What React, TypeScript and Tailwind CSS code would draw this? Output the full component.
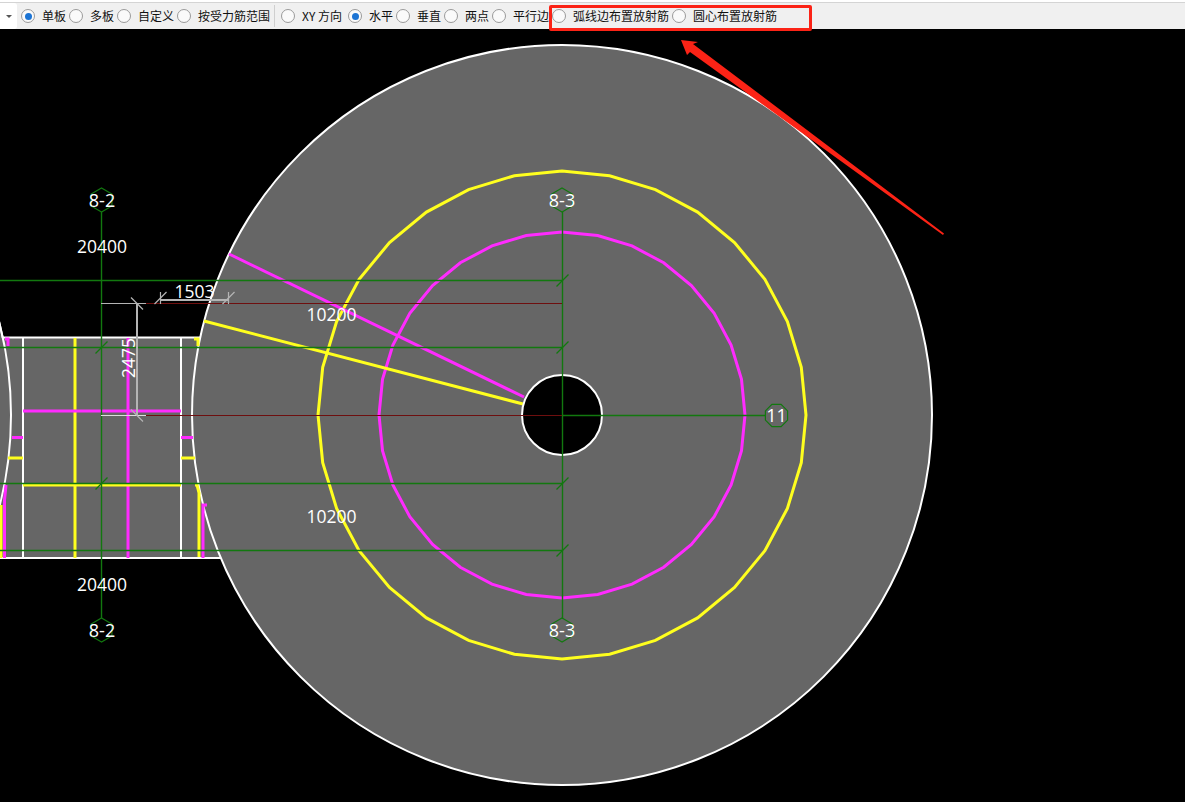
import React from "react";

const ITEMS = [
  { label: "单板", checked: true, w: "w-[24px]" },
  { label: "多板", checked: false, w: "w-[24px]" },
  { label: "自定义", checked: false, w: "w-[36px]" },
  { label: "按受力筋范围", checked: false, w: "w-[72px]" },
];

const ITEMS2 = [
  { label: "XY 方向", checked: false, w: "w-[43px]" },
  { label: "水平", checked: true, w: "w-[24px]" },
  { label: "垂直", checked: false, w: "w-[24px]" },
  { label: "两点", checked: false, w: "w-[24px]" },
  { label: "平行边", checked: false, w: "w-[36px]" },
  { label: "弧线边布置放射筋", checked: false, w: "w-[96px]" },
  { label: "圆心布置放射筋", checked: false, w: "w-[84px]" },
];

const Radio: React.FC<{ label: string; checked: boolean; w: string }> = ({ label, checked, w }) => (
  <div className="flex items-center gap-[7px] mr-[3px]">
    <span className="flex h-[14px] w-[14px] items-center justify-center rounded-full border border-[#9a9a9a] bg-[#fafafa]">
      {checked && <span className="h-[7px] w-[7px] rounded-full bg-[#1c74d4]" />}
    </span>
    <span className={`${w} whitespace-nowrap text-[12px] leading-none text-[#111]`}>{label}</span>
  </div>
);

// regular polygon around the slab centre, with a vertex on each axis
const ring = (cx: number, cy: number, r: number, n: number, rot = 0) =>
  Array.from({ length: n }, (_, i) => {
    const a = (i * 2 * Math.PI) / n + rot;
    return `${(cx + r * Math.cos(a)).toFixed(1)},${(cy + r * Math.sin(a)).toFixed(1)}`;
  }).join(" ");

const GREEN = "#12780f";
const DARKRED = "#6e0f0f";
const DIM = "#b4b4b4";

const Tick: React.FC<{ x: number; y: number; back?: boolean; color?: string; s?: number }> = ({
  x,
  y,
  back,
  color = GREEN,
  s = 6,
}) => <line x1={x - s} y1={back ? y - s : y + s} x2={x + s} y2={back ? y + s : y - s} stroke={color} strokeWidth="1.2" />;

const Label: React.FC<{ x: number; y: number; children: React.ReactNode; rotate?: boolean; size?: number }> = ({
  x,
  y,
  children,
  rotate,
  size = 17.5,
}) => (
  <text
    x={x}
    y={y}
    fill="#fff"
    fontSize={size}
    textAnchor="middle"
    dominantBaseline="central"
    fontFamily="'Open Sans', sans-serif"
    transform={rotate ? `rotate(-90 ${x} ${y})` : undefined}
  >
    {children}
  </text>
);

export default function App() {
  return (
    <div className="relative flex h-[802px] w-[1185px] flex-col overflow-hidden bg-black font-['Noto_Sans_CJK_SC','Noto_Sans',sans-serif]">
      {/* Toolbar */}
      <div className="h-[29px] shrink-0 bg-white pt-[2px]">
        <div className="flex h-[27px] items-center border-t border-[#d4d4d4] bg-[#f0f0f0]">
          <div className="flex h-[26px] w-[17px] items-center justify-center rounded-r-[3px] bg-white pl-[1px]">
            <span className="h-0 w-0 border-x-[3px] border-t-[3px] border-x-transparent border-t-[#555]" />
          </div>
          <div className="ml-[4px] flex items-center">
            {ITEMS.map((it) => (
              <Radio key={it.label} {...it} />
            ))}
          </div>
          <div className="ml-[1px] mr-[6px] h-[22px] w-px bg-[#cfcfcf]" />
          <div className="flex items-center">
            {ITEMS2.map((it) => (
              <Radio key={it.label} {...it} />
            ))}
          </div>
        </div>
      </div>

      {/* Red annotation box */}
      <div className="absolute left-[549px] top-[5px] h-[26px] w-[263px] rounded-[2px] border-[3px] border-[#fb2316]" />

      {/* CAD canvas */}
      <svg width="1185" height="773" viewBox="0 29 1185 773" className="block">
        {/* slab outline */}
        <circle cx="-359" cy="415" r="370" fill="#666" stroke="#fff" strokeWidth="2" />
        <rect x="0" y="338" width="222" height="220" fill="#666" />
        <line x1="3" y1="337.5" x2="202" y2="337.5" stroke="#fff" strokeWidth="2" />
        <line x1="0" y1="558" x2="222" y2="558" stroke="#fff" strokeWidth="2" />
        <circle cx="-359" cy="415" r="370" fill="none" stroke="#fff" strokeWidth="2" />
        <line x1="23" y1="338" x2="23" y2="558" stroke="#fff" strokeWidth="2" />
        <line x1="181" y1="338" x2="181" y2="558" stroke="#fff" strokeWidth="2" />

        <circle cx="562" cy="415" r="370" fill="#666" stroke="#fff" strokeWidth="2" />

        {/* left slab rebar */}
        <g fill="none" strokeWidth="3">
          <path d="M75 338V558" stroke="#ffff1e" />
          <path d="M128 338V558" stroke="#ff2bff" />
          <path d="M23 411H181" stroke="#ff2bff" />
          <path d="M23 485H181" stroke="#ffff1e" />
          <path d="M12 437.5H23M181 437.5H193" stroke="#ff2bff" />
          <path d="M8 458H23M181 458H195" stroke="#ffff1e" />
          <path d="M194 339H198V346" stroke="#ffff1e" />
          <path d="M5 339H8V346" stroke="#ff2bff" />
          <path d="M195 485H197L199 493V557" stroke="#ffff1e" />
          <path d="M207 505H203V558" stroke="#ff2bff" />
          <path d="M6 485L4.500 500V558" stroke="#ff2bff" />
          <path d="M1 505V558" stroke="#ffff1e" />
        </g>

        {/* radial bars */}
        <polygon points={ring(562, 415, 244, 32)} fill="none" stroke="#ffff1e" strokeWidth="3" />
        <polygon points={ring(562, 415, 183, 32)} fill="none" stroke="#ff2bff" strokeWidth="3" />
        <line x1="229" y1="254" x2="524" y2="397" stroke="#ff2bff" strokeWidth="3" />
        <line x1="204" y1="321" x2="523" y2="404" stroke="#ffff1e" strokeWidth="3" />

        {/* hole */}
        <circle cx="562" cy="415" r="40" fill="#000" stroke="#fff" strokeWidth="2" />

        {/* axes */}
        <g stroke={GREEN} strokeWidth="1.4">
          <line x1="0" y1="280.500" x2="562" y2="280.500" />
          <line x1="0" y1="347.500" x2="562" y2="347.500" />
          <line x1="0" y1="483.500" x2="562" y2="483.500" />
          <line x1="0" y1="550.500" x2="562" y2="550.500" />
          <line x1="101.500" y1="212" x2="101.500" y2="618" />
          <line x1="562.500" y1="212" x2="562.500" y2="619" />
          <line x1="562" y1="415.500" x2="765" y2="415.500" />
        </g>
        <g stroke={DARKRED} strokeWidth="1.2">
          <line x1="146" y1="303.500" x2="562" y2="303.500" />
          <line x1="146" y1="415.500" x2="562" y2="415.500" />
        </g>
        <Tick x={101.5} y={347.5} />
        <Tick x={101.5} y={483.5} />
        <Tick x={562.5} y={280.5} />
        <Tick x={562.5} y={347.5} />
        <Tick x={562.5} y={483.5} />
        <Tick x={562.5} y={550.5} />

        {/* dimensions */}
        <g stroke={DIM} strokeWidth="1.2">
          <line x1="101" y1="303.500" x2="146" y2="303.500" />
          <line x1="101" y1="415.500" x2="146" y2="415.500" stroke="#ddd" />
          <line x1="137" y1="303" x2="137" y2="415" strokeWidth="2" />
          <line x1="160" y1="300" x2="228" y2="300" strokeWidth="2" />
          <line x1="160.500" y1="292" x2="160.500" y2="304" />
          <line x1="228.500" y1="292" x2="228.500" y2="304" />
        </g>
        <Tick x={137} y={303.5} back color={DIM} />
        <Tick x={137} y={415.5} back color={DIM} />
        <Tick x={160.5} y={298} color={DIM} />
        <Tick x={228.5} y={298} color={DIM} />

        {/* axis bubbles */}
        <g fill="none" stroke={GREEN} strokeWidth="1.2">
          <polygon points={ring(101.5, 200, 12, 6, Math.PI / 2)} />
          <polygon points={ring(101.5, 630, 12, 6, Math.PI / 2)} />
          <polygon points={ring(562, 200, 12, 6, Math.PI / 2)} />
          <polygon points={ring(562, 630, 12, 6, Math.PI / 2)} />
          <polygon points={ring(776.5, 415.5, 12, 8, Math.PI / 8)} />
        </g>

        <Label x={102} y={200} size={18}>8-2</Label>
        <Label x={102} y={630} size={18}>8-2</Label>
        <Label x={562} y={200} size={18}>8-3</Label>
        <Label x={562} y={630} size={18}>8-3</Label>
        <Label x={776.5} y={415} size={18}>11</Label>
        <Label x={102} y={246}>20400</Label>
        <Label x={102} y={584}>20400</Label>
        <Label x={331.500} y={314}>10200</Label>
        <Label x={331.500} y={516}>10200</Label>
        <Label x={194.500} y={291}>1503</Label>
        <Label x={128} y={358} rotate>2475</Label>

        {/* red arrow annotation */}
        <polygon points="681,40 698,42 693,44 944,233.500 943,235 690,52 687,55" fill="#fb2316" />
      </svg>
    </div>
  );
}
